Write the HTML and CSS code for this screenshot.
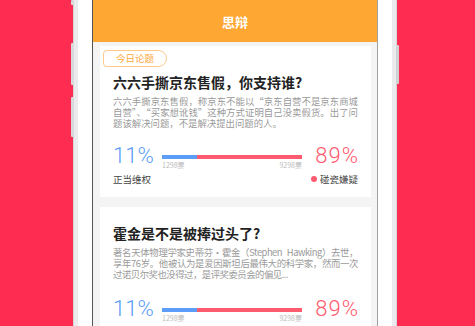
FILE: index.html
```html
<!DOCTYPE html>
<html lang="zh-CN">
<head>
<meta charset="utf-8">
<title>思辩</title>
<link rel="stylesheet" href="styles.css">
</head>
<body>
<div class="stage">
  <div class="phone">
    <span class="btn btn-l1"></span>
    <span class="btn btn-l2"></span>
    <span class="btn btn-l3"></span>
    <span class="btn btn-r1"></span>
    <div class="bezel">
      <div class="screen">
        <div class="header">思辩</div>
        <div class="feed">
          <div class="card">
            <div class="badge">今日论题</div>
            <div class="title">六六手撕京东售假，你支持谁?</div>
            <div class="desc">六六手撕京东售假，称京东不能以“京东自营不是京东商城自营”、“买家想讹钱”这种方式证明自己没卖假货。出了问题该解决问题，不是解决提出问题的人。</div>
            <div class="vote">
              <div class="side side-l">
                <div class="pct pct-l">11%</div>
                <div class="lbl">正当维权</div>
              </div>
              <div class="mid">
                <div class="bar"><div class="bar-blue" style="width:25%"></div></div>
                <div class="counts"><span>1298票</span><span>9298票</span></div>
              </div>
              <div class="side side-r">
                <div class="pct pct-r">89%</div>
                <div class="lbl"><span class="dot"></span>碰瓷嫌疑</div>
              </div>
            </div>
          </div>
          <div class="card">
            <div class="title">霍金是不是被捧过头了?</div>
            <div class="desc desc-2">著名天体物理学家史蒂芬·霍金（Stephen Hawking）去世，享年76岁。他被认为是爱因斯坦后最伟大的科学家，然而一次过诺贝尔奖也没得过，是评奖委员会的偏见...</div>
            <div class="vote">
              <div class="side side-l">
                <div class="pct pct-l">11%</div>
                <div class="lbl">名副其实</div>
              </div>
              <div class="mid">
                <div class="bar"><div class="bar-blue" style="width:25%"></div></div>
                <div class="counts"><span>1298票</span><span>9298票</span></div>
              </div>
              <div class="side side-r">
                <div class="pct pct-r">89%</div>
                <div class="lbl"><span class="dot"></span>言过其实</div>
              </div>
            </div>
          </div>
        </div>
      </div>
    </div>
  </div>
</div>
</body>
</html>
```
FILE: styles.css
```css
html, body {
  margin: 0;
  height: 326px;
  overflow: hidden;
}
body {
  background: #ff2c52;
  font-family: "Noto Sans CJK SC", "Noto Sans", sans-serif;
}
.stage {
  display: flex;
  padding-left: 73px;
}
.phone {
  position: relative;
  display: flex;
  width: 324px;
  height: 420px;
  box-sizing: border-box;
  border-left: 1px solid #d6d6da;
  border-right: 1px solid #d6d6da;
  padding: 0 4px;
  background: #ebebed;
}
.btn {
  position: absolute;
  width: 3px;
  background: #d9d9dd;
  border-radius: 1px;
}
.btn-l1 { left: -3px; top: 0; height: 5px; }
.btn-l2 { left: -3px; top: 43px; height: 42px; }
.btn-l3 { left: -3px; top: 97px; height: 40px; }
.btn-r1 { right: -3px; top: 45px; height: 39px; background: #cfd3d6; }
.bezel {
  flex: 1;
  display: flex;
  padding: 0 14px;
  background: #fff;
}
.screen {
  flex: 1;
  border-left: 1px solid #555;
  border-right: 1px solid #a0a0a0;
  background: #f4f4f4;
}
.header {
  height: 42px;
  display: flex;
  align-items: center;
  justify-content: center;
  background: #ffa733;
  color: #fff;
  font-size: 13px;
  font-weight: bold;
}
.feed {
  display: flex;
  flex-direction: column;
  gap: 10px;
  padding: 4px 6px 0 7px;
}
.card {
  background: #fff;
  padding: 11px 13px 12px;
}
.badge {
  width: fit-content;
  height: 17px;
  box-sizing: border-box;
  margin: -7px 0 0 -10px;
  padding: 0 12px;
  border: 1px solid #ffc98a;
  border-radius: 4px 9px 9px 4px;
  color: #ffa73a;
  font-size: 9.5px;
  line-height: 15px;
}
.title {
  margin-top: 6px;
  font-size: 14px;
  line-height: 18px;
  font-weight: bold;
  color: #222;
}
.desc {
  margin-top: 5px;
  font-size: 9.4px;
  line-height: 10.9px;
  color: #9a9a9a;
  text-align: justify;
}
.desc-2 {
  line-height: 11.2px;
  letter-spacing: -0.5px;
  word-spacing: 3px;
}
.vote {
  display: flex;
  margin-top: 15px;
}
.desc-2 + .vote {
  margin-top: 17px;
}
.side-l {
  width: 40px;
}
.side-r {
  width: 49px;
  display: flex;
  flex-direction: column;
  align-items: flex-end;
}
.pct {
  font-family: Roboto, "Liberation Sans", sans-serif;
  font-weight: 300;
  font-size: 22px;
  line-height: 24px;
  white-space: nowrap;
}
.pct-l { color: #5b9df9; }
.pct-r {
  color: #ff5b6e;
  letter-spacing: 1px;
  margin-right: -1px;
}
.lbl {
  display: flex;
  align-items: center;
  margin-top: 5px;
  font-size: 9.5px;
  line-height: 12px;
  color: #444;
  white-space: nowrap;
}
.dot {
  width: 6px;
  height: 6px;
  margin-right: 3px;
  border-radius: 50%;
  background: #ff5b6e;
}
.mid {
  flex: 1;
  margin: 0 7px 0 9px;
  padding-top: 11px;
}
.bar {
  display: flex;
  height: 4px;
  background: #ff5b6e;
}
.bar-blue {
  background: #5b9df9;
}
.counts {
  display: flex;
  justify-content: space-between;
  margin-top: 1px;
  font-size: 7px;
  line-height: 10px;
  color: #bbb;
}
```
